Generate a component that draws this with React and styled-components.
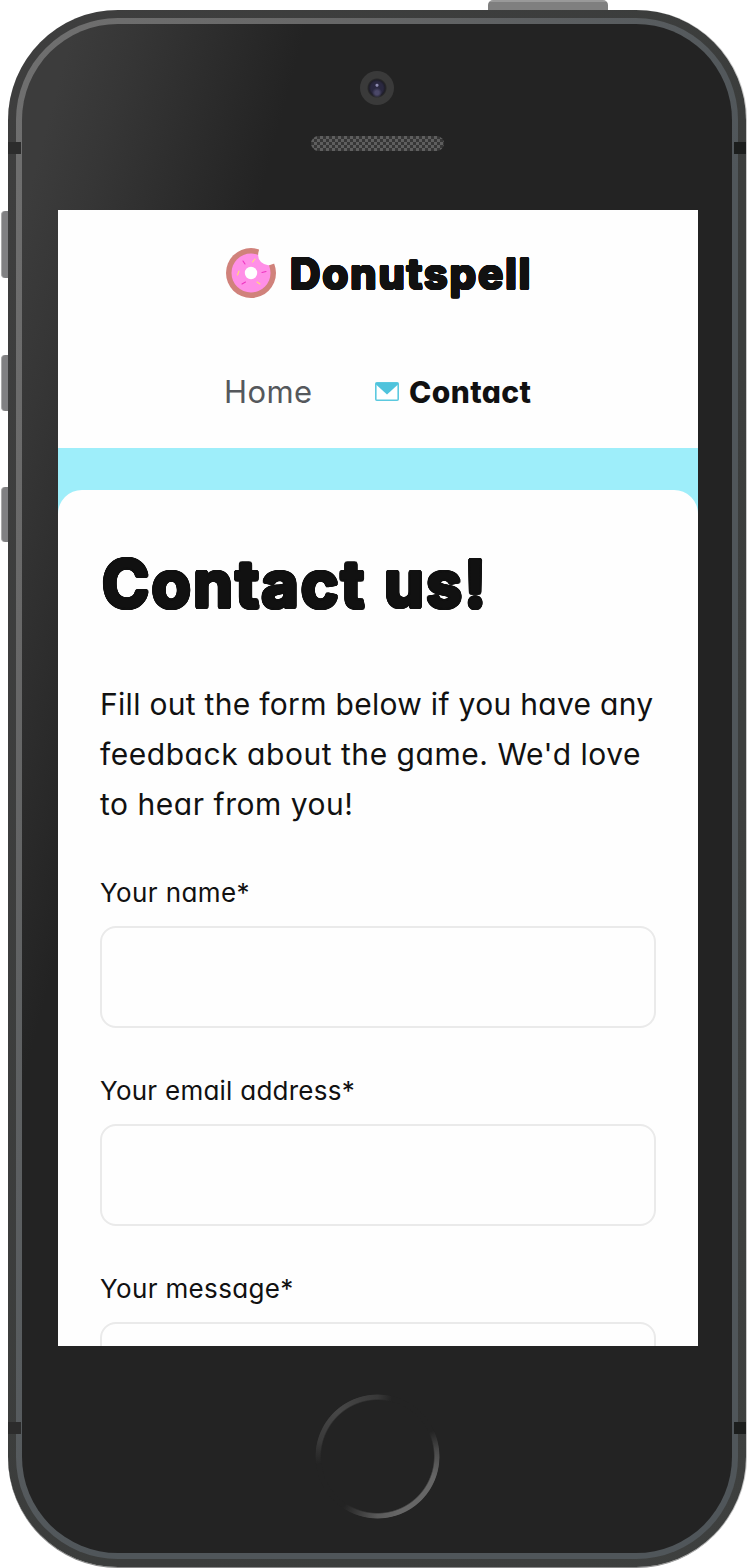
import React from "react";
import styled, { createGlobalStyle } from "styled-components";

const GlobalStyle = createGlobalStyle`
  *, *::before, *::after { box-sizing: border-box; }
  html { background: #fff; }
  body { margin: 0; overflow: hidden; }
  h1, p { margin: 0; }
`;

// Shadows placed around a circle thicken the letters and round their corners.
const rounded = (radius) =>
  Array.from({ length: 20 }, (_, i) => {
    const a = (i / 20) * Math.PI * 2;
    return `${(Math.cos(a) * radius).toFixed(2)}px ${(Math.sin(a) * radius).toFixed(2)}px 0.4px #111`;
  }).join(", ");

const Stage = styled.main`
  position: relative;
  width: 748px;
  height: 1568px;
  padding: 10px 2px 1px 8px;
  overflow: hidden;
  background: #fff;
  color: #111;
  font-family: Inter, "Liberation Sans", sans-serif;
  font-feature-settings: "cv11";
`;

const SideButton = styled.span`
  position: absolute;
  left: 1px;
  top: ${(p) => p.$top}px;
  width: 14px;
  height: ${(p) => p.$height}px;
  border-left: 1px solid #aaa;
  border-radius: 4px 0 0 4px;
  background: #808082;
`;

const PowerButton = styled.span`
  position: absolute;
  left: 488px;
  top: 0;
  width: 120px;
  height: 16px;
  border-radius: 5px 5px 0 0;
  background: linear-gradient(#999 0 2px, #7f7f7f 2px);
`;

const Shell = styled.div`
  position: relative;
  height: 1557px;
  padding: 8px;
  border-radius: 110px;
  background: linear-gradient(115deg, #3e3e3e, #3b3d3c 60%, #3e403f);
  box-shadow: 1px 0 0 #c9c9c9, 0 1px 0 #888;
`;

const Rim = styled.div`
  height: 1541px;
  padding: 6px;
  border-radius: 102px;
  background: linear-gradient(115deg, #707070, #686868 20%, #50565a 55%, #50565a);
`;

const Face = styled.div`
  display: flex;
  flex-direction: column;
  align-items: center;
  height: 1529px;
  border-radius: 96px;
  background: linear-gradient(105deg, #3c3c3c 50px, #363636 110px, #232323 275px);
`;

const Antenna = styled.span`
  position: absolute;
  ${(p) => (p.$right ? "right: 0;" : "left: 0;")}
  top: ${(p) => p.$top}px;
  width: ${(p) => (p.$right ? 12 : 13)}px;
  height: 12px;
  background: ${(p) => (p.$right ? "#1c1e1d" : "#2c2c2c")};
`;

const Forehead = styled.div`
  display: flex;
  flex-direction: column;
  align-items: center;
  gap: 31px;
  height: 186px;
  flex: none;
  padding-top: 47px;
`;

const Camera = styled.div`
  width: 34px;
  height: 34px;
  border-radius: 50%;
  background: radial-gradient(circle at 50% 42%, #8d8bb0 0 1px, transparent 2px),
    radial-gradient(circle at 50% 64%, #4b4868 0 2px, transparent 5px),
    radial-gradient(circle, #2a2840 0 6px, #1f1e29 8px, #282828 9px, #3a3a3a 10px);
`;

const Speaker = styled.div`
  width: 133px;
  height: 15px;
  border-radius: 8px;
  background: repeating-conic-gradient(#5e5e5e 0 25%, #363636 0 50%) 0 0 / 6px 6px;
`;

const Screen = styled.div`
  width: 640px;
  height: 1136px;
  margin-left: 2px;
  flex: none;
  overflow: hidden;
  background: #fefefe;
`;

const Header = styled.header`
  display: flex;
  flex-direction: column;
  height: 238px;
`;

const Brand = styled.div`
  display: flex;
  align-items: center;
  justify-content: center;
  gap: 14px;
  height: 126px;
`;

const BrandName = styled.span`
  width: 240px;
  padding-top: 2px;
  font: 700 42px/60px Inter, sans-serif;
  font-feature-settings: normal;
  letter-spacing: 2.1px;
  white-space: nowrap;
  text-shadow: ${rounded(1.2)};
`;

const Nav = styled.nav`
  display: flex;
  align-items: center;
  padding: 0 0 1px 166px;
  height: 112px;
`;

const NavLink = styled.a`
  display: flex;
  align-items: center;
  gap: 10px;
  width: ${(p) => (p.$active ? 160 : 151)}px;
  color: ${(p) => (p.$active ? "#111" : "#55585c")};
  font-weight: ${(p) => (p.$active ? 800 : 400)};
  font-size: ${(p) => (p.$active ? 30 : 31)}px;
  line-height: 40px;
  white-space: nowrap;
  letter-spacing: 0.4px;
`;

const Banner = styled.div`
  padding-top: 42px;
  background: #9eeefa;
`;

const Card = styled.section`
  display: flex;
  flex-direction: column;
  height: 900px;
  padding: 52px 42px 0;
  border-radius: 24px 24px 0 0;
  background: #fefefe;
`;

const Title = styled.h1`
  padding-left: 2px;
  font: 700 64px/84px Inter, sans-serif;
  font-feature-settings: normal;
  letter-spacing: 2.3px;
  white-space: nowrap;
  text-shadow: ${rounded(1.9)};
`;

const Intro = styled.p`
  margin: 53px -20px 0 0;
  font-size: 30px;
  line-height: 50px;
  white-space: nowrap;
`;

const Line = styled.span`
  display: block;
  letter-spacing: ${(p) => p.$track}px;
`;

const Field = styled.label`
  display: flex;
  flex-direction: column;
  height: 198px;
  flex: none;
`;

const FieldLabel = styled.span`
  height: 58px;
  font-size: 26px;
  line-height: 50px;
  letter-spacing: ${(p) => p.$track}px;
`;

const Fields = styled.form`
  margin-top: 39px;
`;

const Input = styled.input`
  width: 556px;
  height: 102px;
  padding: 0 24px;
  border: 2px solid #eaeaea;
  border-radius: 16px;
  background: #fefefe;
`;

const HomeArea = styled.div`
  display: flex;
  padding-top: 48px;
`;

const HomeButton = styled.div`
  width: 125px;
  height: 125px;
  margin-left: 1px;
  border-radius: 50%;
  background: conic-gradient(#383838, #232323 14deg 65deg, #4a4a4a 85deg, #666 110deg 160deg, #5a5a5a 180deg, #232323 214deg 263deg, #3a3a3a 285deg, #474747 320deg, #383838);
  mask: radial-gradient(circle, transparent 56px, #000 57.5px 61.5px, transparent 62.5px);
`;

function Donut() {
  return (
    <svg width="50" height="50" viewBox="0 0 50 50" aria-hidden="true">
      <circle cx="25" cy="25" r="25" fill="#d0827b" />
      <circle cx="25" cy="25" r="19.5" fill="#ff8fe7" />
      <circle cx="25" cy="25" r="6.2" fill="#fefefe" />
      <g strokeWidth="1.1" strokeLinecap="round">
        <path d="m17 13 2 3M36 24.500l4-1M16 36l3.500-2" stroke="#ef35c1" />
        <path d="m29 11-2.500 3M11.500 27l1.500-4M31 34l3 2" stroke="#ffe073" />
      </g>
      <path d="M33 0V2Q30.500 10 35 14T44 17L50 15V0z" fill="#fefefe" />
    </svg>
  );
}

function Envelope() {
  return (
    <svg width="24" height="19" viewBox="0 0 24 19" aria-hidden="true">
      <rect x=".8" y=".8" width="22.400" height="17.400" rx="1" fill="#fff" stroke="#5bc9df" strokeWidth="1.6" />
      <path d="M1 1h22v1.500L12 12.500 1 2.500z" fill="#4fc3dc" />
    </svg>
  );
}

const fields = [
  { label: "Your name*", track: 0.4 },
  { label: "Your email address*", track: 0.25 },
  { label: "Your message*", track: 0.35 },
];

export default function App() {
  return (
    <Stage>
      <GlobalStyle />
      <SideButton $top={211} $height={67} />
      <SideButton $top={355} $height={56} />
      <SideButton $top={487} $height={55} />
      <PowerButton />
      <Shell>
        <Rim>
          <Face>
            <Forehead>
              <Camera />
              <Speaker />
            </Forehead>
            <Screen>
              <Header>
                <Brand>
                  <Donut />
                  <BrandName>Donutspell</BrandName>
                </Brand>
                <Nav>
                  <NavLink>Home</NavLink>
                  <NavLink $active>
                    <Envelope />
                    Contact
                  </NavLink>
                </Nav>
              </Header>
              <Banner>
                <Card>
                  <Title>Contact us!</Title>
                  <Intro>
                    <Line $track={0.3}>Fill out the form below if you have any</Line>
                    <Line $track={0.53}>feedback about the game. We'd love</Line>
                    <Line $track={0.53}>to hear from you!</Line>
                  </Intro>
                  <Fields>
                    {fields.map((f) => (
                      <Field key={f.label}>
                        <FieldLabel $track={f.track}>{f.label}</FieldLabel>
                        <Input />
                      </Field>
                    ))}
                  </Fields>
                </Card>
              </Banner>
            </Screen>
            <HomeArea>
              <HomeButton />
            </HomeArea>
          </Face>
        </Rim>
        <Antenna $top={132} />
        <Antenna $top={132} $right />
        <Antenna $top={1412} />
        <Antenna $top={1412} $right />
      </Shell>
    </Stage>
  );
}
